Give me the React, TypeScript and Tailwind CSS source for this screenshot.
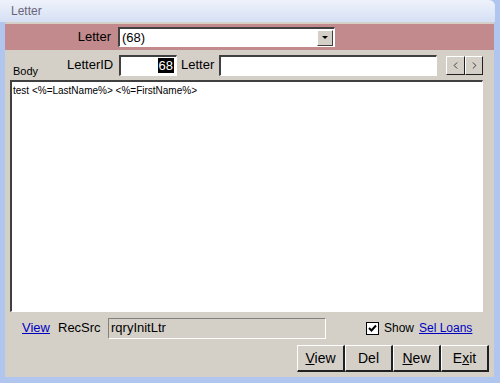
import { ChevronLeft, ChevronRight } from 'lucide-react';

const font = { fontFamily: '"Liberation Sans", Arial, sans-serif' };

function Sunken({ className, children }: { className: string; children?: React.ReactNode }) {
  return (
    <div className={`border-t-2 border-l-2 border-t-[#404040] border-l-[#404040] border-b border-r border-b-white border-r-white ${className}`}>
      {children}
    </div>
  );
}

function Btn({ children }: { children: React.ReactNode }) {
  return (
    <button className="w-[48px] h-[27px] bg-[#d4d0c8] border-t border-l border-t-white border-l-white border-b-2 border-r-2 border-b-[#202020] border-r-[#202020] text-[14px] text-black flex items-center justify-center">
      {children}
    </button>
  );
}

export default function App() {
  return (
    <div className="w-[500px] h-[383px] bg-[#b0c6ee] flex flex-col" style={font}>
      {/* title bar */}
      <div className="h-[22px] mr-[5px] rounded-tr-[6px] bg-gradient-to-b from-[#eef2fb] to-[#d6e0f4] flex items-center pl-[11px]">
        <span className="text-[12px] text-[#6a6478]">Letter</span>
      </div>

      <div className="flex-1 ml-[5px] mr-[6px] mb-[6px] bg-[#d4d0c8] flex flex-col pt-[2px]">
        {/* maroon header */}
        <div className="h-[26px] bg-[#c28a8c] flex items-center">
          <span className="w-[106px] text-right text-[13px] text-black">Letter</span>
          <Sunken className="ml-[7px] w-[217px] h-[20px] bg-white flex items-center">
            <span className="pl-[2px] text-[13px] leading-none text-black flex-1">(68)</span>
            <div className="w-[16px] h-[16px] mr-[1px] bg-[#d4d0c8] border-t border-l border-white border-b border-r border-b-[#404040] border-r-[#404040] flex items-center justify-center">
              <div className="w-0 h-0 border-l-[3px] border-r-[3px] border-t-[3px] border-l-transparent border-r-transparent border-t-black" />
            </div>
          </Sunken>
        </div>

        {/* id row */}
        <div className="h-[30px] flex items-center">
          <span className="w-[62px] pl-[8px] pt-[12px] text-[11px] text-black">Body</span>
          <span className="w-[52px] text-[13px] text-black">LetterID</span>
          <Sunken className="w-[58px] h-[21px] bg-white flex items-center justify-end pr-[2px]">
            <span className="bg-black text-white text-[13px] leading-[15px] px-[1px]">68</span>
          </Sunken>
          <span className="w-[42px] pl-[4px] text-[13px] text-black">Letter</span>
          <Sunken className="w-[218px] h-[21px] bg-white" />
          <div className="ml-[9px] flex">
            <button className="w-[19px] h-[19px] bg-[#d4d0c8] border-t border-l border-white border-b border-r border-b-[#202020] border-r-[#202020] flex items-center justify-center">
              <ChevronLeft size={11} strokeWidth={1.5} className="text-black" />
            </button>
            <button className="w-[18px] h-[19px] bg-[#d4d0c8] border-t border-l border-white border-b border-r border-b-[#202020] border-r-[#202020] flex items-center justify-center">
              <ChevronRight size={11} strokeWidth={1.5} className="text-black" />
            </button>
          </div>
        </div>

        {/* body text */}
        <Sunken className="ml-[5px] w-[473px] h-[232px] bg-white">
          <div className="pl-[1px] pt-[1px] text-[10px] text-black">test &lt;%=LastName%&gt; &lt;%=FirstName%&gt;</div>
        </Sunken>

        {/* recsrc row */}
        <div className="h-[30px] flex items-center pt-[2px]">
          <span className="ml-[17px] w-[36px] text-[13px] text-[#0000c0]"><span className="underline">View</span></span>
          <span className="w-[50px] text-[13px] text-black">RecSrc</span>
          <div className="w-[218px] h-[21px] border-t border-l border-[#808080] border-b border-r border-b-white border-r-white flex items-center pl-[2px]">
            <span className="text-[13px] text-black">rqryInitLtr</span>
          </div>
          <div className="ml-[40px] w-[13px] h-[13px] bg-white border border-black flex items-center justify-center">
            <svg width="9" height="9" viewBox="0 0 9 9">
              <path d="M1 4 L3.5 6.5 L8 1.5" stroke="black" strokeWidth="2" fill="none" />
            </svg>
          </div>
          <span className="ml-[5px] w-[35px] text-[12px] text-black">Show</span>
          <span className="text-[12px] text-[#0000c0] underline">Sel Loans</span>
        </div>

        {/* buttons */}
        <div className="flex justify-end mr-[5px] mt-[3px]">
          <Btn><span><span className="underline">V</span>iew</span></Btn>
          <Btn>Del</Btn>
          <Btn><span><span className="underline">N</span>ew</span></Btn>
          <Btn><span>E<span className="underline">x</span>it</span></Btn>
        </div>
      </div>
    </div>
  );
}
